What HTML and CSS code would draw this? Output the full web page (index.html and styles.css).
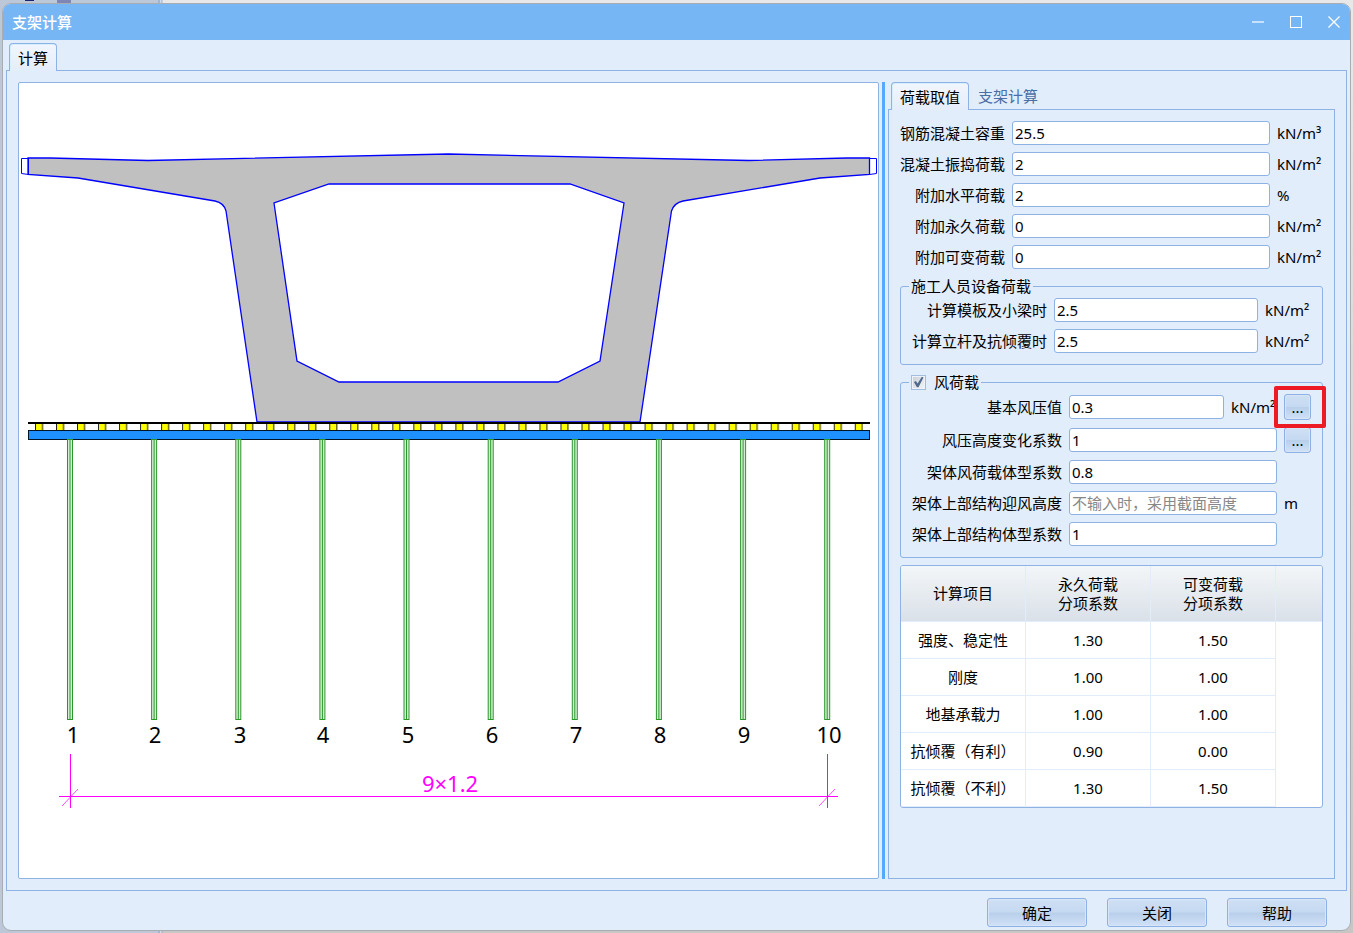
FILE: index.html
```html
<!DOCTYPE html>
<html lang="zh-CN">

<head>
  <meta charset="UTF-8">
  <meta name="viewport" content="width=device-width, initial-scale=1.0">
  <title>支架计算</title>
  <link rel="stylesheet" href="styles.css">
</head>

<body>
  <div class="window">
    <div class="title-bar">
      <h1>支架计算</h1>
      <div class="win-btns">
        <button type="button" aria-label="最小化">
          <svg width="12" height="12" viewBox="0 0 12 12"><path d="M0 6h12" stroke="#c9e2fb" stroke-width="2"/></svg>
        </button>
        <button type="button" aria-label="最大化">
          <svg width="12" height="12" viewBox="0 0 12 12"><rect x=".5" y=".5" width="11" height="11" fill="none" stroke="#fff"/></svg>
        </button>
        <button type="button" aria-label="关闭窗口">
          <svg width="12" height="12" viewBox="0 0 12 12"><path d="M.5 .5l11 11M11.5 .5l-11 11" stroke="#fff" stroke-width="1.3"/></svg>
        </button>
      </div>
    </div>

    <div class="tabs main-tabs">
      <button type="button" class="tab active">计算</button>
    </div>
    <div class="main">
      <!-- 截面图 -->
      <div class="canvas">
        <svg viewBox="19 83 859 795" role="img" aria-label="支架布置图">
          <defs>
            <pattern id="beam" x="35" y="423" width="21.02" height="8" patternUnits="userSpaceOnUse">
              <rect x="0" y="0" width="8" height="8" fill="#ff0"/>
              <path d="M.5 0v8M7.5 0v8" stroke="#222" stroke-width="1"/>
            </pattern>
            <g id="post">
              <rect x="-2.5" y="439.5" width="5" height="280" fill="#d5eed5" stroke="#2a962a"/>
              <path d="M0 440v280" stroke="#2a962a"/>
            </g>
          </defs>

          <!-- 箱梁 -->
          <path class="girder" fill-rule="evenodd" d="M28 158H50L148 160.5L448.5 154L749 160.5L847 158H869.5V174.5L820 178L683 201Q674 203 671.5 211L640 422H257L226 211Q224 203 215 201L78 178L28 174.5Z
            M329 184H570L624 203L600 361L558 382H339L297 361L274 203Z"/>
          <path class="edge" d="M28.5 158.5H21.5V173.5L28.5 174.5Z M869.5 158.5H876.5V173.5L869.5 174.5Z"/>

          <!-- 模板、小梁、主梁 -->
          <rect x="35" y="424" width="828" height="6" fill="url(#beam)"/>
          <path d="M28 423H870" stroke="#000" stroke-width="2"/>
          <rect x="28.5" y="430.5" width="841" height="9" fill="#1e90ff" stroke="#001428"/>

          <!-- 立杆 -->
          <use href="#post" x="70"/>
          <use href="#post" x="154.1"/>
          <use href="#post" x="238.3"/>
          <use href="#post" x="322.4"/>
          <use href="#post" x="406.5"/>
          <use href="#post" x="490.7"/>
          <use href="#post" x="574.8"/>
          <use href="#post" x="658.9"/>
          <use href="#post" x="743.1"/>
          <use href="#post" x="827.2"/>
          <g class="num">
            <text x="73" y="743">1</text>
            <text x="155" y="743">2</text>
            <text x="240" y="743">3</text>
            <text x="323" y="743">4</text>
            <text x="408" y="743">5</text>
            <text x="492" y="743">6</text>
            <text x="576" y="743">7</text>
            <text x="660" y="743">8</text>
            <text x="744" y="743">9</text>
            <text x="829" y="743">10</text>
          </g>

          <!-- 尺寸标注 -->
          <path class="dim" d="M59 796.5H838M70.5 754V808M827.5 754V808"/>
          <path class="dim tick" d="M62 806L78 789M819 806L835 789"/>
          <text class="dim-text" x="450" y="792">9×1.2</text>
        </svg>
      </div>

      <div class="splitter"></div>

      <div class="side">
        <div class="tabs side-tabs">
          <button type="button" class="tab active">荷载取值</button>
          <button type="button" class="tab">支架计算</button>
        </div>
        <form class="panel">
          <div class="row">
            <label for="rc">钢筋混凝土容重</label>
            <input type="text" id="rc" value="25.5">
            <span>kN/m³</span>
          </div>
          <div class="row">
            <label for="vib">混凝土振捣荷载</label>
            <input type="text" id="vib" value="2">
            <span>kN/m²</span>
          </div>
          <div class="row">
            <label for="hor">附加水平荷载</label>
            <input type="text" id="hor" value="2">
            <span>%</span>
          </div>
          <div class="row">
            <label for="perm">附加永久荷载</label>
            <input type="text" id="perm" value="0">
            <span>kN/m²</span>
          </div>
          <div class="row">
            <label for="var">附加可变荷载</label>
            <input type="text" id="var" value="0">
            <span>kN/m²</span>
          </div>

          <fieldset class="crew">
            <legend>施工人员设备荷载</legend>
            <div class="row">
              <label for="crew1">计算模板及小梁时</label>
              <input type="text" id="crew1" value="2.5">
              <span>kN/m²</span>
            </div>
            <div class="row">
              <label for="crew2">计算立杆及抗倾覆时</label>
              <input type="text" id="crew2" value="2.5">
              <span>kN/m²</span>
            </div>
          </fieldset>

          <fieldset class="wind">
            <legend><label class="check"><input type="checkbox" checked>风荷载</label></legend>
            <div class="row">
              <label for="w0">基本风压值</label>
              <div class="with-unit">
                <input type="text" id="w0" value="0.3">
                <span>kN/m²</span>
              </div>
              <div class="marked">
                <button type="button" class="btn more" aria-label="选择基本风压值">...</button>
              </div>
            </div>
            <div class="row">
              <label for="uz">风压高度变化系数</label>
              <input type="text" id="uz" value="1">
              <button type="button" class="btn more" aria-label="选择风压高度变化系数">...</button>
            </div>
            <div class="row">
              <label for="us">架体风荷载体型系数</label>
              <input type="text" id="us" value="0.8">
            </div>
            <div class="row">
              <label for="wh">架体上部结构迎风高度</label>
              <input type="text" id="wh" placeholder="不输入时，采用截面高度">
              <span>m</span>
            </div>
            <div class="row">
              <label for="ut">架体上部结构体型系数</label>
              <input type="text" id="ut" value="1">
            </div>
          </fieldset>

          <div class="table-box">
            <table>
              <thead>
                <tr>
                  <th>计算项目</th>
                  <th>永久荷载<br>分项系数</th>
                  <th>可变荷载<br>分项系数</th>
                  <td class="rest"></td>
                </tr>
              </thead>
              <tbody>
                <tr><td>强度、稳定性</td><td>1.30</td><td>1.50</td></tr>
                <tr><td>刚度</td><td>1.00</td><td>1.00</td></tr>
                <tr><td>地基承载力</td><td>1.00</td><td>1.00</td></tr>
                <tr><td>抗倾覆（有利）</td><td>0.90</td><td>0.00</td></tr>
                <tr><td>抗倾覆（不利）</td><td>1.30</td><td>1.50</td></tr>
              </tbody>
            </table>
          </div>
        </form>
      </div>
    </div>

    <div class="footer">
      <button type="button" class="btn">确定</button>
      <button type="button" class="btn">关闭</button>
      <button type="button" class="btn">帮助</button>
    </div>
  </div>
</body>

</html>
```
FILE: styles.css
```css
* {
  margin: 0;
  padding: 0;
  box-sizing: border-box;
}

body {
  min-height: 100vh;
  padding: 3px 2px 2px;
  display: flex;
  background:
    linear-gradient(#1c2470, #1c2470) 25px 0 / 9px 1px no-repeat,
    linear-gradient(#7f86b5, #7f86b5) 57px 0 / 14px 3px no-repeat,
    linear-gradient(to right, #bcc7d8 158px, #9fb6d6 158px, #9fb6d6 160px, #e4e8ee 160px, #9fb6d6 162px, transparent 163px),
    linear-gradient(#e8e8e8, #c8c6c4);
  font: 15px/20px "Noto Sans", "Noto Sans CJK SC", sans-serif;
  color: #000;
}

button,
input {
  font: inherit;
  color: inherit;
}

.window {
  flex: 1;
  display: flex;
  flex-direction: column;
  border: 1px solid #a9adb2;
  border-radius: 9px;
  overflow: hidden;
  background-color: #e1edfb;
}

/* 标题栏 */
.title-bar {
  height: 36px;
  padding-left: 9px;
  display: flex;
  align-items: center;
  justify-content: space-between;
  background-color: #77b6f4;
  color: #fff;
}

.title-bar h1 {
  font-size: 15px;
  font-weight: 500;
}

.win-btns {
  display: flex;
  gap: 6px;
}

.win-btns button {
  width: 32px;
  height: 32px;
  display: flex;
  align-items: center;
  justify-content: center;
  border: none;
  background: none;
}

/* 选项卡 */
.tabs {
  display: flex;
  position: relative;
  z-index: 1;
  margin-bottom: -1px;
}

.main-tabs {
  padding: 3px 6px 0;
}

.side-tabs {
  padding-left: 3px;
}

.tab {
  height: 28px;
  padding: 0 8px;
  border: 1px solid transparent;
  background: none;
  color: #4a6fa5;
}

.tab.active {
  border-color: #8db2e3;
  border-bottom: none;
  border-radius: 4px 4px 0 0;
  background: linear-gradient(#f2f6fd, #e4edfa);
  box-shadow: inset 1px 1px #d5efff;
  color: #000;
}

.main {
  flex: 1;
  margin: 0 3px;
  padding: 11px;
  display: flex;
  gap: 3px;
  border: 1px solid #8db2e3;
}

.canvas {
  flex: 1;
  min-width: 0;
  display: flex;
  border: 1px solid #8db2e3;
  border-radius: 2px;
  background-color: #fff;
}

.canvas svg {
  width: 100%;
  height: 100%;
}

.girder {
  fill: #c0c0c0;
  stroke: #00f;
  stroke-width: 1.3;
}

.edge {
  fill: none;
  stroke: #00f;
}

.num text,
.dim-text {
  font-size: 22px;
  text-anchor: middle;
}

.dim {
  fill: none;
  stroke: #f0f;
}

.tick {
  opacity: 0.7;
}

.dim-text {
  fill: #f0f;
}

.splitter {
  width: 3px;
  background-color: #55aaff;
  cursor: col-resize;
}

/* 右侧参数 */
.side {
  flex: 0 0 447px;
  display: flex;
  flex-direction: column;
}

.panel {
  flex: 1;
  padding: 11px;
  display: flex;
  flex-direction: column;
  gap: 7px;
  border: 1px solid #8db2e3;
}

.row {
  display: grid;
  grid-template-columns: 105px 1fr 46px;
  column-gap: 7px;
  align-items: center;
}

.row label {
  text-align: right;
  white-space: nowrap;
}

.row span {
  white-space: nowrap;
}

input[type="text"] {
  width: 100%;
  min-width: 0;
  height: 24px;
  padding: 0 2px;
  border: 1px solid #8db2e3;
  border-radius: 3px;
  background-color: #fff;
}

input::placeholder {
  color: #888;
}

fieldset {
  min-width: 0;
  padding: 2px 11px 11px;
  border: 1px solid #8db2e3;
  border-radius: 3px;
}

legend {
  height: 20px;
  margin-left: -3px;
  padding: 0 2px;
}

fieldset .row + .row {
  margin-top: 7px;
}

.crew .row {
  grid-template-columns: 135px 1fr 46px;
}

.wind .row {
  grid-template-columns: 150px 1fr 27px;
}

.check {
  display: flex;
  align-items: center;
  gap: 8px;
}

.check input {
  appearance: none;
  width: 15px;
  height: 15px;
  border: 1px solid #a3bde0;
  background: linear-gradient(135deg, #c9ced6, #f4f6f8);
  box-shadow: inset 0 0 0 1px #eef3fa;
}

.check input:checked::after {
  content: "";
  display: block;
  width: 13px;
  height: 13px;
  background-color: #4f6a8c;
  clip-path: polygon(15% 50%, 30% 42%, 43% 62%, 76% 10%, 88% 16%, 50% 90%, 38% 90%);
}

.with-unit {
  display: grid;
  grid-template-columns: 1fr 46px;
  gap: 7px;
  align-items: center;
}

.btn {
  width: 100px;
  height: 29px;
  border: 1px solid #8fb0e2;
  border-radius: 3px;
  background: linear-gradient(#cfe0f4, #c5d9f1 48%, #b9cfea 52%, #cfe1f7);
  box-shadow: inset 0 0 0 1px #d6e5f8;
}

.btn.more {
  display: block;
  width: 27px;
  height: 26px;
}

.marked {
  position: relative;
}

.marked::after {
  content: "";
  position: absolute;
  top: -8px;
  right: -15px;
  bottom: -8px;
  left: -10px;
  border: 4px solid #ed1c24;
  border-radius: 2px;
  pointer-events: none;
}

/* 系数表 */
.table-box {
  border: 1px solid #8db2e3;
  border-radius: 3px;
  overflow: hidden;
  background-color: #fff;
}

table {
  width: 100%;
  table-layout: fixed;
  border-collapse: separate;
  border-spacing: 0;
}

th,
td {
  width: 125px;
  height: 37px;
  border-right: 1px solid #e1edfb;
  border-bottom: 1px solid #e1edfb;
  text-align: center;
  white-space: nowrap;
}

thead tr {
  background: linear-gradient(#f3f6f8, #d9e0e8);
}

th {
  height: 56px;
  font-weight: normal;
  line-height: 19px;
}

thead .rest {
  width: auto;
  border-right: none;
}

.footer {
  padding: 7px 23px 3px;
  display: flex;
  justify-content: flex-end;
  gap: 20px;
}
```
